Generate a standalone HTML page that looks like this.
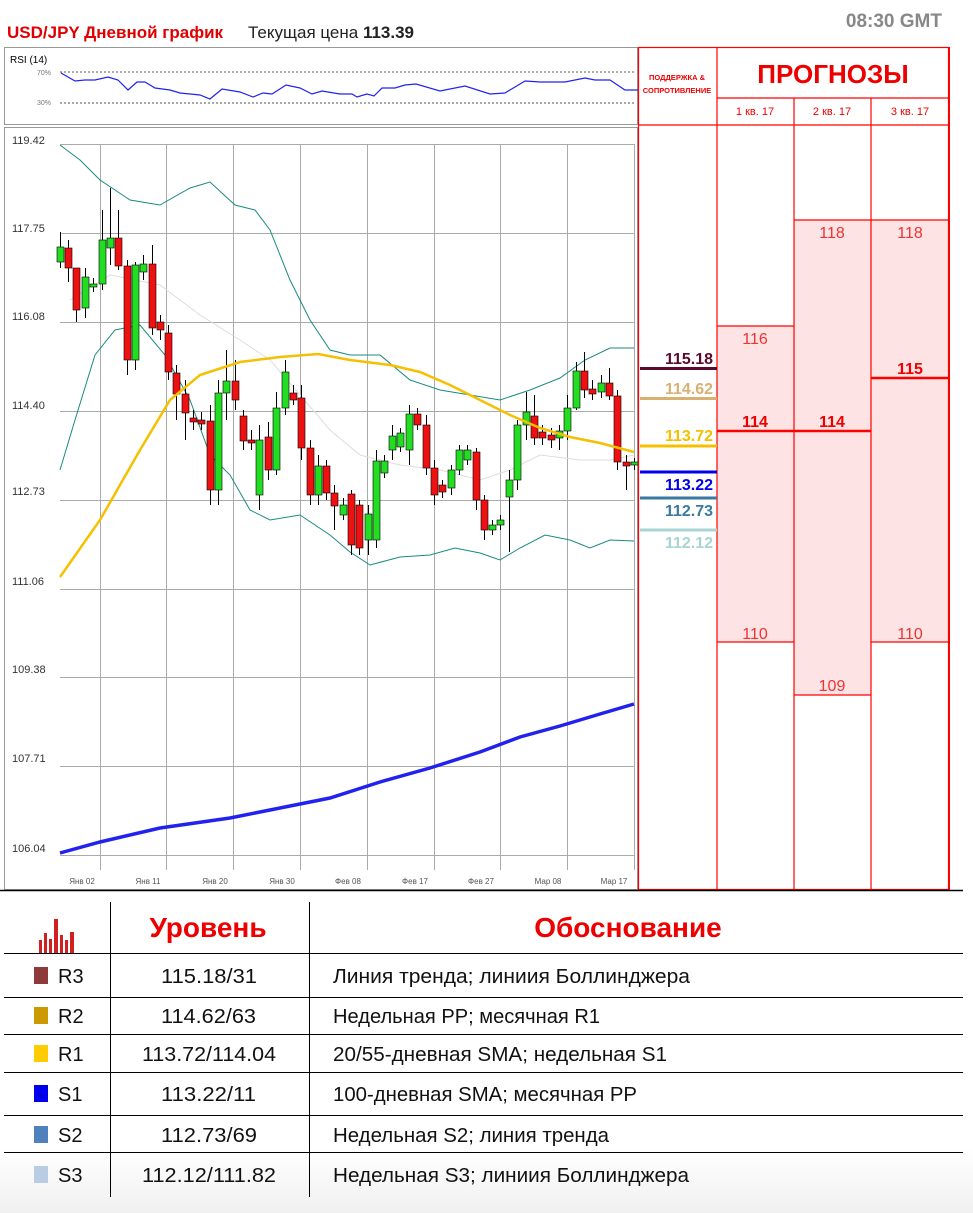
<!DOCTYPE html>
<html><head><meta charset="utf-8"><style>
body{margin:0;background:#fff;width:973px;height:1213px;overflow:hidden}
svg{display:block}
text{font-family:"Liberation Sans Narrow","Liberation Sans",sans-serif}
</style></head><body>
<svg id="s" width="973" height="1213" viewBox="0 0 973 1213" xmlns="http://www.w3.org/2000/svg">
<defs><linearGradient id="bg" x1="0" y1="0" x2="0" y2="1"><stop offset="0.8" stop-color="#fff"/><stop offset="1" stop-color="#f0f0f0"/></linearGradient></defs>
<text x="7" y="38" font-size="17" font-weight="bold" fill="#e00000">USD/JPY Дневной график</text>
<text x="248" y="38" font-size="17" fill="#222">Текущая цена <tspan font-weight="bold">113.39</tspan></text>
<text x="942" y="27" font-size="19" font-weight="bold" fill="#888" text-anchor="end">08:30 GMT</text>
<!-- RSI -->
<rect x="4.5" y="47.5" width="633" height="77" fill="#fff" stroke="#999"/>
<text x="10" y="63" font-size="10" fill="#000">RSI (14)</text>
<text x="37" y="75" font-size="7" fill="#777">70%</text>
<text x="37" y="105" font-size="7" fill="#777">30%</text>
<line x1="60" y1="72" x2="634" y2="72" stroke="#555" stroke-dasharray="2,2"/>
<line x1="60" y1="103" x2="634" y2="103" stroke="#555" stroke-dasharray="2,2"/>
<polyline fill="none" stroke="#2222ee" stroke-width="1.2" points="61,73 75,81 85,80 95,80 108,77 118,80 128,90 137,82 145,82 155,88 170,90 180,93 200,95 210,99 222,89 240,92 253,97 263,93 272,94 286,85 300,88 312,94 322,91 340,94 352,94 357,97 367,94 374,96 382,88 395,88 405,85 416,84 440,91 465,86 490,94 505,93 525,81 540,82 565,82 585,78 595,80 610,80 625,90 638,90"/>
<!-- main chart -->
<rect x="4.5" y="127.5" width="633" height="762" fill="#fff" stroke="#999"/>
<g stroke="#aaa" stroke-width="1">
<line x1="60" y1="144.5" x2="634" y2="144.5"/><line x1="60" y1="233.5" x2="634" y2="233.5"/><line x1="60" y1="322.5" x2="634" y2="322.5"/><line x1="60" y1="411.5" x2="634" y2="411.5"/><line x1="60" y1="500.5" x2="634" y2="500.5"/><line x1="60" y1="589.5" x2="634" y2="589.5"/><line x1="60" y1="677.5" x2="634" y2="677.5"/><line x1="60" y1="766.5" x2="634" y2="766.5"/><line x1="60" y1="855.5" x2="634" y2="855.5"/>
<line x1="100.5" y1="144" x2="100.5" y2="870"/><line x1="166.5" y1="144" x2="166.5" y2="870"/><line x1="233.5" y1="144" x2="233.5" y2="870"/><line x1="300.5" y1="144" x2="300.5" y2="870"/><line x1="367.5" y1="144" x2="367.5" y2="870"/><line x1="434.5" y1="144" x2="434.5" y2="870"/><line x1="500.5" y1="144" x2="500.5" y2="870"/><line x1="567.5" y1="144" x2="567.5" y2="870"/><line x1="634.5" y1="144" x2="634.5" y2="870"/>
</g>
<g font-size="11" fill="#333">
<text x="12" y="144">119.42</text><text x="12" y="232">117.75</text><text x="12" y="320">116.08</text><text x="12" y="409">114.40</text><text x="12" y="495">112.73</text><text x="12" y="585">111.06</text><text x="12" y="673">109.38</text><text x="12" y="762">107.71</text><text x="12" y="852">106.04</text>
</g>
<g font-size="8" fill="#555" text-anchor="middle">
<text x="82" y="884">Янв 02</text><text x="148" y="884">Янв 11</text><text x="215" y="884">Янв 20</text><text x="282" y="884">Янв 30</text><text x="348" y="884">Фев 08</text><text x="415" y="884">Фев 17</text><text x="481" y="884">Фев 27</text><text x="548" y="884">Мар 08</text><text x="614" y="884">Мар 17</text>
</g>
<polyline fill="none" stroke="#ddd" stroke-width="1" points="70,300 110,275 160,285 200,315 240,340 270,360 300,395 330,430 360,455 400,465 440,470 480,480 510,470 540,455 580,460 610,460 634,455"/>
<polyline fill="none" stroke="#1a8a80" stroke-width="1" points="60,145 80,160 100,180 115,190 130,200 160,205 190,188 210,182 235,205 255,210 270,230 290,280 310,320 330,350 350,355 380,355 410,380 440,390 470,395 500,400 530,390 560,378 585,360 610,348 634,348"/>
<polyline fill="none" stroke="#1a8a80" stroke-width="1" points="60,470 75,420 95,355 115,330 140,325 165,355 190,400 210,455 230,475 250,510 270,520 300,515 330,535 350,552 370,565 400,557 430,555 455,548 480,553 500,560 520,548 545,535 570,540 590,548 610,540 634,541"/>
<g id="candles"></g>
<polyline fill="none" stroke="#f5c000" stroke-width="2.5" points="60,577 100,520 140,450 170,400 200,375 240,362 280,357 318,354 350,360 390,365 420,372 450,385 480,400 510,415 540,428 570,437 600,443 634,452"/>
<polyline fill="none" stroke="#2222ee" stroke-width="3.5" points="60,853 100,842 160,828 230,818 280,808 330,798 380,782 430,768 480,752 520,737 560,726 600,714 634,704"/>
<!-- right panel -->
<rect x="717" y="326" width="77" height="316" fill="#fde3e3"/>
<rect x="794" y="220" width="77" height="475" fill="#fde3e3"/>
<rect x="871" y="220" width="78" height="422" fill="#fde3e3"/>
<g stroke="#f00" stroke-width="1.2" fill="none">
<rect x="638.5" y="47.5" width="310" height="842"/>
<line x1="717" y1="47" x2="717" y2="890"/>
<line x1="794" y1="98" x2="794" y2="890"/>
<line x1="871" y1="98" x2="871" y2="890"/>
<line x1="717" y1="98" x2="949" y2="98"/>
<line x1="638" y1="125" x2="949" y2="125"/>
<line x1="717" y1="326" x2="794" y2="326"/><line x1="717" y1="642" x2="794" y2="642"/>
<line x1="794" y1="220" x2="949" y2="220"/><line x1="794" y1="695" x2="871" y2="695"/>
<line x1="871" y1="642" x2="949" y2="642"/>
</g>
<line x1="717" y1="431" x2="871" y2="431" stroke="#f00" stroke-width="2.5"/>
<line x1="871" y1="378" x2="949" y2="378" stroke="#f00" stroke-width="2.5"/>
<line x1="949" y1="47" x2="949" y2="890" stroke="#f00" stroke-width="2"/>
<text x="677" y="80" font-size="7.5" font-weight="bold" fill="#e00" text-anchor="middle">ПОДДЕРЖКА &amp;</text>
<text x="677" y="93" font-size="7.5" font-weight="bold" fill="#e00" text-anchor="middle">СОПРОТИВЛЕНИЕ</text>
<text x="833" y="83" font-size="26" font-weight="bold" fill="#e00" text-anchor="middle">ПРОГНОЗЫ</text>
<g font-size="11" fill="#e00" text-anchor="middle"><text x="755" y="115">1 кв. 17</text><text x="832" y="115">2 кв. 17</text><text x="910" y="115">3 кв. 17</text></g>
<g font-size="16" fill="#e33" text-anchor="middle">
<text x="755" y="344">116</text><text x="755" y="639">110</text>
<text x="832" y="238">118</text><text x="832" y="691">109</text>
<text x="910" y="238">118</text><text x="910" y="639">110</text>
</g>
<g font-size="16" font-weight="bold" fill="#e00" text-anchor="middle">
<text x="755" y="427">114</text><text x="832" y="427">114</text><text x="910" y="374">115</text>
</g>
<line x1="640" y1="368.5" x2="717" y2="368.5" stroke="#5a0a2a" stroke-width="3"/>
<line x1="640" y1="398.5" x2="717" y2="398.5" stroke="#d8b070" stroke-width="3"/>
<line x1="640" y1="446" x2="717" y2="446" stroke="#f5c000" stroke-width="3"/>
<line x1="640" y1="472" x2="717" y2="472" stroke="#0000ee" stroke-width="3"/>
<line x1="640" y1="498" x2="717" y2="498" stroke="#3a7aa0" stroke-width="3"/>
<line x1="640" y1="530" x2="717" y2="530" stroke="#a8d4d4" stroke-width="3"/>
<g font-size="16" font-weight="bold" text-anchor="end">
<text x="713" y="364" fill="#5a0a2a">115.18</text>
<text x="713" y="394" fill="#d8b070">114.62</text>
<text x="713" y="441" fill="#f5c000">113.72</text>
<text x="713" y="490" fill="#0000ee">113.22</text>
<text x="713" y="516" fill="#3a7aa0">112.73</text>
<text x="713" y="548" fill="#a8d4d4">112.12</text>
</g>
<!-- table -->
<rect x="0" y="891" width="973" height="322" fill="url(#bg)"/>
<line x1="0" y1="890.5" x2="963" y2="890.5" stroke="#000" stroke-width="1.5"/>
<g stroke="#000" stroke-width="1">
<line x1="110.5" y1="902" x2="110.5" y2="1197"/><line x1="309.5" y1="902" x2="309.5" y2="1197"/>
<line x1="4" y1="953.5" x2="963" y2="953.5"/><line x1="4" y1="997.5" x2="963" y2="997.5"/><line x1="4" y1="1034.5" x2="963" y2="1034.5"/><line x1="4" y1="1072.5" x2="963" y2="1072.5"/><line x1="4" y1="1115.5" x2="963" y2="1115.5"/><line x1="4" y1="1152.5" x2="963" y2="1152.5"/>
</g>
<g fill="#d02020"><rect x="39" y="940" width="3" height="13"/><rect x="44" y="933" width="3" height="20"/><rect x="49" y="939" width="3" height="14"/><rect x="54" y="919" width="4" height="34"/><rect x="60" y="935" width="3" height="18"/><rect x="65" y="940" width="3" height="13"/><rect x="70" y="932" width="4" height="21"/></g>
<text x="208" y="937" font-size="28" font-weight="bold" fill="#e00" text-anchor="middle">Уровень</text>
<text x="628" y="937" font-size="28" font-weight="bold" fill="#e00" text-anchor="middle">Обоснование</text>
<rect x="34" y="967" width="14" height="17" fill="#8e3a3a"/>
<rect x="34" y="1007" width="14" height="17" fill="#cc9900"/>
<rect x="34" y="1045" width="14" height="17" fill="#ffcc00"/>
<rect x="34" y="1085" width="14" height="17" fill="#0000ee"/>
<rect x="34" y="1126" width="14" height="17" fill="#4f81bd"/>
<rect x="34" y="1166" width="14" height="17" fill="#b8cce4"/>
<g font-size="20" fill="#111">
<text x="58" y="983">R3</text><text x="58" y="1023">R2</text><text x="58" y="1061">R1</text><text x="58" y="1101">S1</text><text x="58" y="1142">S2</text><text x="58" y="1182">S3</text>
</g>
<g font-size="20" fill="#111" lengthAdjust="spacingAndGlyphs">
<text x="161" y="983" textLength="96" lengthAdjust="spacingAndGlyphs">115.18/31</text>
<text x="161" y="1023" textLength="95" lengthAdjust="spacingAndGlyphs">114.62/63</text>
<text x="142" y="1061" textLength="134" lengthAdjust="spacingAndGlyphs">113.72/114.04</text>
<text x="161" y="1101" textLength="95" lengthAdjust="spacingAndGlyphs">113.22/11</text>
<text x="161" y="1142" textLength="96" lengthAdjust="spacingAndGlyphs">112.73/69</text>
<text x="142" y="1182" textLength="134" lengthAdjust="spacingAndGlyphs">112.12/111.82</text>
</g>
<g font-size="20" fill="#111">
<text x="333" y="983" textLength="357" lengthAdjust="spacingAndGlyphs">Линия тренда; линиия Боллинджера</text>
<text x="333" y="1023" textLength="267" lengthAdjust="spacingAndGlyphs">Недельная PP; месячная R1</text>
<text x="333" y="1061" textLength="334" lengthAdjust="spacingAndGlyphs">20/55-дневная SMA; недельная S1</text>
<text x="333" y="1101" textLength="304" lengthAdjust="spacingAndGlyphs">100-дневная SMA; месячная PP</text>
<text x="333" y="1142" textLength="276" lengthAdjust="spacingAndGlyphs">Недельная S2; линия тренда</text>
<text x="333" y="1182" textLength="356" lengthAdjust="spacingAndGlyphs">Недельная S3; линиия Боллинджера</text>
</g>
</svg>
<script>
var d=[[60,'G',247,262,232,268],[68,'R',248,268,240,282],[76,'R',268,310,275,322],[85,'G',277,308,268,318],[93,'G',284,287,278,292],[102,'G',240,284,210,290],[110,'G',238,248,188,265],[118,'R',238,266,210,270],[127,'R',266,360,260,375],[135,'G',265,360,262,370],[143,'G',264,272,255,280],[152,'R',264,328,245,335],[160,'R',322,330,315,340],[168,'R',333,372,325,380],[176,'R',373,394,365,420],[185,'R',394,413,380,440],[193,'R',418,422,410,430],[201,'R',420,424,412,430],[210,'R',421,490,405,505],[218,'G',393,490,380,505],[226,'G',381,393,350,420],[235,'R',381,400,360,410],[243,'R',416,441,410,450],[251,'R',440,443,430,450],[259,'G',440,495,425,510],[268,'R',437,470,422,480],[276,'G',408,470,392,475],[285,'G',372,408,360,415],[293,'R',393,400,385,405],[301,'R',398,448,385,460],[310,'R',448,495,440,505],[318,'G',466,495,455,505],[326,'R',466,493,460,500],[334,'R',493,506,485,530],[343,'G',505,515,498,520],[351,'R',494,545,490,555],[359,'R',505,548,500,555],[368,'G',514,540,505,555],[376,'G',461,540,450,548],[384,'G',461,473,455,478],[392,'G',436,450,425,460],[400,'G',433,447,428,452],[409,'G',414,450,405,465],[417,'R',414,425,408,430],[426,'R',425,468,415,475],[434,'R',468,495,460,505],[442,'R',485,492,480,498],[451,'G',470,488,465,495],[459,'G',450,470,445,475],[467,'G',450,460,445,465],[476,'R',452,500,448,510],[484,'R',500,530,495,540],[492,'G',525,530,520,535],[500,'G',520,525,515,530],[509,'G',480,497,470,552],[517,'G',425,480,420,490],[526,'G',412,425,392,440],[534,'R',416,438,395,445],[542,'R',432,438,425,445],[551,'R',435,440,428,448],[559,'G',431,438,425,450],[567,'G',408,431,395,440],[576,'G',371,408,362,410],[584,'R',371,390,352,398],[592,'R',389,394,380,400],[601,'G',383,392,375,398],[609,'R',383,396,368,400],[617,'R',396,462,390,470],[626,'R',462,466,455,490],[634,'G',462,465,458,470]];
var g=document.getElementById('candles'),h='';
d.forEach(function(c){var col=c[1]=='G'?'#22dd22':'#ee1111';h+='<line x1="'+(c[0]+.5)+'" y1="'+c[4]+'" x2="'+(c[0]+.5)+'" y2="'+c[5]+'" stroke="#000" stroke-width="1"/>';h+='<rect x="'+(c[0]-3)+'" y="'+c[2]+'" width="7" height="'+Math.max(2,c[3]-c[2])+'" fill="'+col+'" stroke="#000" stroke-width="0.6"/>';});
g.innerHTML=h;
</script>
</body></html>
